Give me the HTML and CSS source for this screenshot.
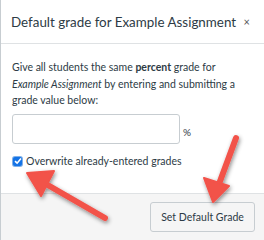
FILE: index.html
```html
<!DOCTYPE html>
<html>
<head>
<meta charset="utf-8">
<link rel="stylesheet" href="styles.css">
</head>
<body>
<div class="modal">
  <div class="header">
    <span class="title">Default grade for Example Assignment</span>
    <span class="close">×</span>
  </div>
  <div class="body">
    <p class="desc">Give all students the same <b>percent</b> grade for <i>Example Assignment</i> by entering and submitting a grade value below:</p>
    <div class="field">
      <div class="input"></div>
      <span class="pct">%</span>
    </div>
    <label class="check"><span class="box"><svg width="8" height="8" viewBox="0 0 8 8"><path d="M1 4.2 L3.1 6.2 L7 1.6" fill="none" stroke="#fff" stroke-width="1.6"/></svg></span>Overwrite already-entered grades</label>
  </div>
  <div class="footer">
    <button class="btn">Set Default Grade</button>
  </div>
  <svg class="arrows" width="264" height="240" viewBox="0 0 264 240">
    <defs>
      <filter id="sh" x="-30%" y="-30%" width="160%" height="160%">
        <feDropShadow dx="1" dy="2" stdDeviation="2" flood-color="#000" flood-opacity="0.45"/>
      </filter>
    </defs>
    <g filter="url(#sh)" fill="#f2524a" stroke="#f2524a">
      <line x1="105" y1="218" x2="46" y2="184" stroke-width="6" stroke-linecap="round"/>
      <polygon points="27,173 54,171 41,196" stroke-width="2" stroke-linejoin="round"/>
      <line x1="236" y1="138" x2="219" y2="184" stroke-width="6" stroke-linecap="round"/>
      <polygon points="213,202 204,178 229,186" stroke-width="2" stroke-linejoin="round"/>
    </g>
  </svg>
</div>
</body>
</html>
```

FILE: styles.css
```css
html, body {
  margin: 0;
  padding: 0;
  background: #fff;
}
body {
  width: 264px;
  height: 240px;
  overflow: hidden;
  font-family: Lato, "Noto Sans", sans-serif;
  color: #2d3b45;
}
.modal {
  position: relative;
  width: 263px;
  height: 240px;
  border-left: 1px solid #c7cdd1;
  display: flex;
  flex-direction: column;
}
.header {
  height: 43px;
  border-bottom: 1px solid #dfe2e4;
  display: flex;
  align-items: center;
  padding: 0 14px 0 10px;
  gap: 2px;
}
.title {
  font-size: 13.4px;
  white-space: nowrap;
  padding-top: 1px;
}
.close {
  margin-left: auto;
  font-size: 11px;
  color: #555;
}
.body {
  flex: 1;
  padding: 15px 11px 0 11px;
}
.desc {
  margin: 0;
  font-size: 10.5px;
  line-height: 16.7px;
  width: 240px;
}
.desc b { font-weight: 700; }
.field {
  margin-top: 5px;
  display: flex;
  align-items: center;
  gap: 3px;
}
.input {
  width: 166px;
  height: 28px;
  border: 1px solid #c7cdd1;
  border-radius: 3px;
}
.pct {
  font-size: 10px;
  padding-top: 6px;
}
.check {
  margin-top: 10px;
  display: flex;
  align-items: center;
  gap: 4px;
  font-size: 10.5px;
  line-height: 14px;
}
.box {
  width: 9px;
  height: 9px;
  margin-left: 1px;
  background: #1473e6;
  border-radius: 2px;
  display: flex;
  align-items: center;
  justify-content: center;
  box-shadow: 0 0 0 1px #7fb0ea;
}
.footer {
  height: 46px;
  background: #f5f5f5;
  border-top: 1px solid #dfe2e4;
  display: flex;
  align-items: center;
  justify-content: flex-end;
  padding-right: 9px;
}
.btn {
  font-family: Lato, "Noto Sans", sans-serif;
  font-size: 10.5px;
  color: #2d3b45;
  background: #f5f5f5;
  border: 1px solid #c7cdd1;
  border-radius: 3px;
  height: 30px;
  width: 105px;
  padding: 0;
}
.arrows {
  position: absolute;
  left: -1px;
  top: 0;
  pointer-events: none;
}
```
